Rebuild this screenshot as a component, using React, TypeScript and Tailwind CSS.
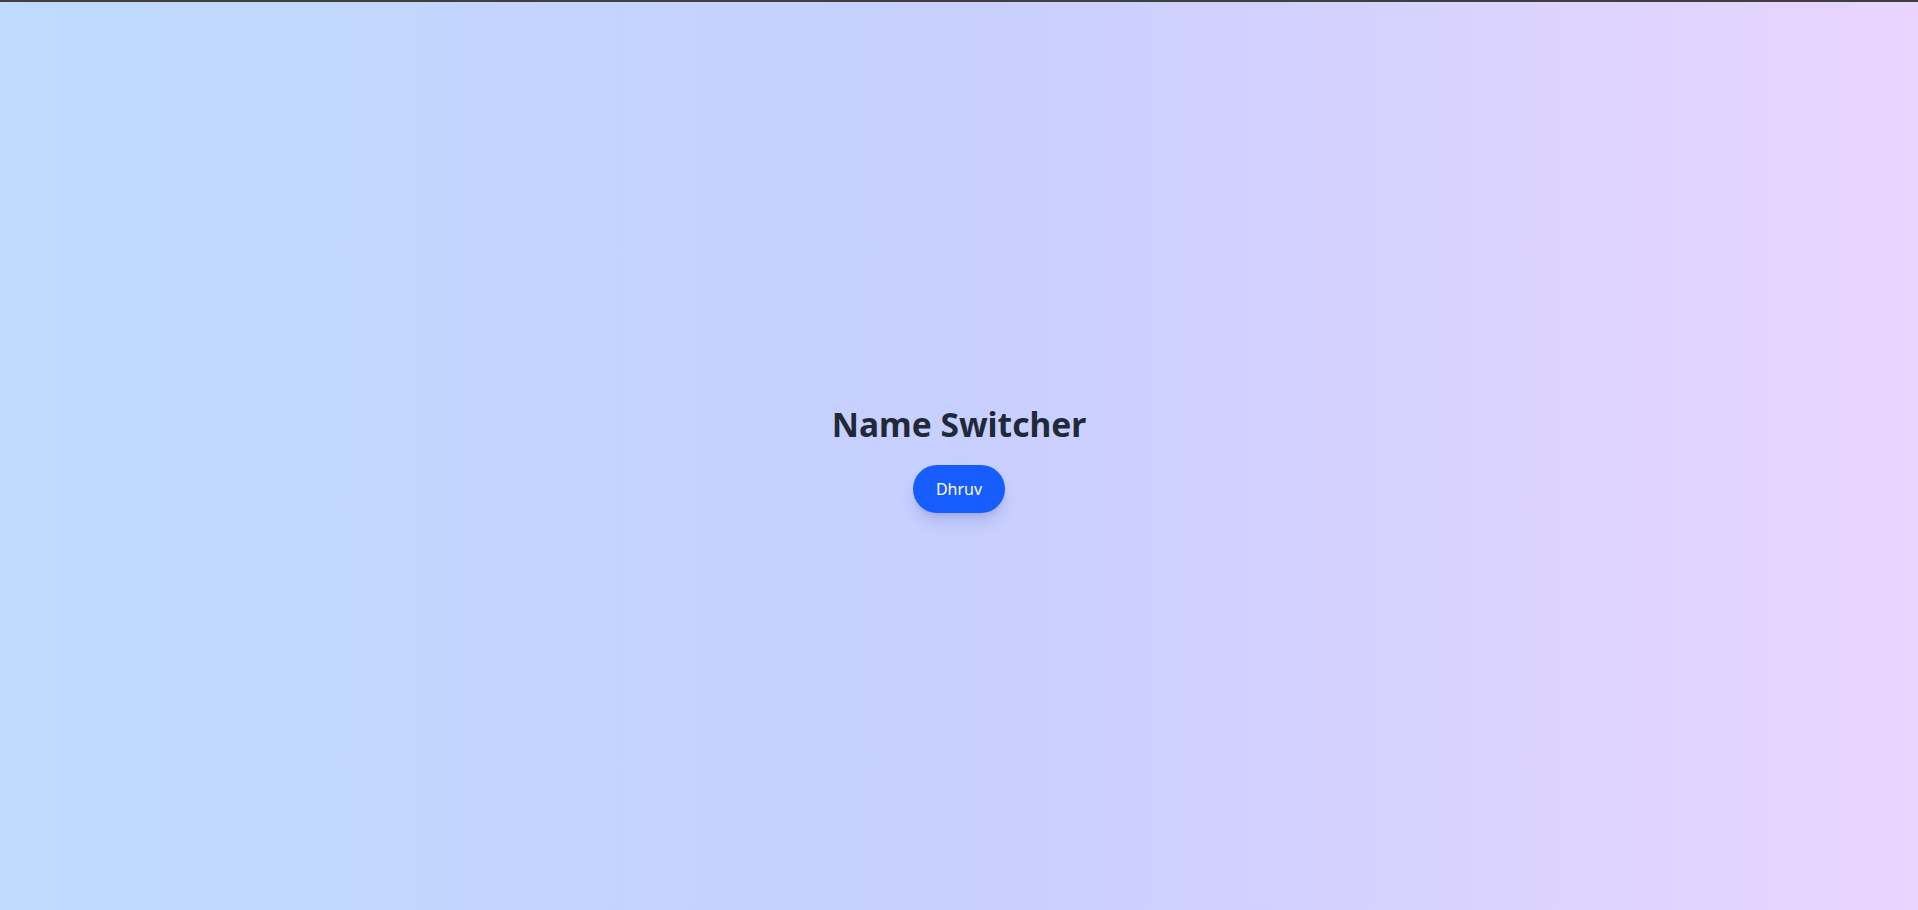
import { useState } from 'react'

const names = ['Dhruv', 'Aarav', 'Meera', 'Kabir']

const App = () => {
  const [idx, setIdx] = useState(0)

  return (
    <div className="min-h-screen border-t-2 border-[#3f3f3f] pt-[5px] bg-linear-to-r from-[#bfdbfe] via-[#c7cffe] to-[#e9d5ff] flex flex-col items-center justify-center font-['Noto_Sans',sans-serif]">
      <h1 className="text-[33.5px] leading-[40px] font-bold text-[#1f2937] mb-[21px]">Name Switcher</h1>
      <button
        className="h-12 px-[23px] rounded-full bg-[#175cff] text-white text-[16px] shadow-lg shadow-[#6470c0]/30"
        onClick={() => setIdx((idx + 1) % names.length)}
      >
        {names[idx]}
      </button>
    </div>
  )
}

export default App
